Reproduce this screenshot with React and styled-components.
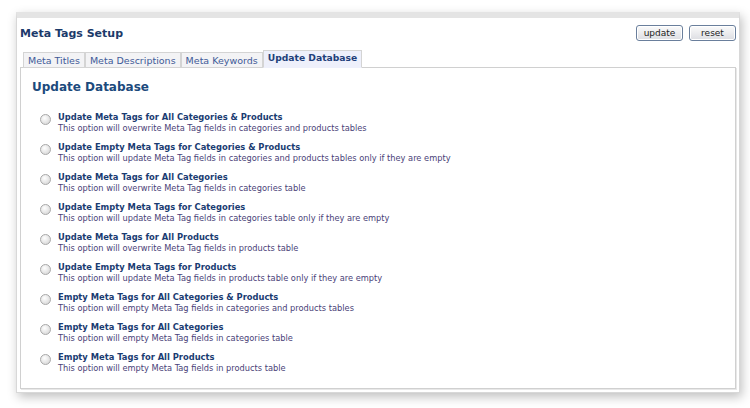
import React from 'react';
import styled, { createGlobalStyle } from 'styled-components';

const options = [
  ['Update Meta Tags for All Categories & Products', 'This option will overwrite Meta Tag fields in categories and products tables'],
  ['Update Empty Meta Tags for Categories & Products', 'This option will update Meta Tag fields in categories and products tables only if they are empty'],
  ['Update Meta Tags for All Categories', 'This option will overwrite Meta Tag fields in categories table'],
  ['Update Empty Meta Tags for Categories', 'This option will update Meta Tag fields in categories table only if they are empty'],
  ['Update Meta Tags for All Products', 'This option will overwrite Meta Tag fields in products table'],
  ['Update Empty Meta Tags for Products', 'This option will update Meta Tag fields in products table only if they are empty'],
  ['Empty Meta Tags for All Categories & Products', 'This option will empty Meta Tag fields in categories and products tables'],
  ['Empty Meta Tags for All Categories', 'This option will empty Meta Tag fields in categories table'],
  ['Empty Meta Tags for All Products', 'This option will empty Meta Tag fields in products table'],
];

const tabs = ['Meta Titles', 'Meta Descriptions', 'Meta Keywords', 'Update Database'];

const App = () => {
  return (
    <>
      <GlobalStyle />
      <Page>
        <Frame>
          <Header>
            <Title>Meta Tags Setup</Title>
            <Buttons>
              <Button>update</Button>
              <Button>reset</Button>
            </Buttons>
          </Header>
          <Tabs>
            {tabs.map((t, i) => (
              <Tab key={t} $active={i === tabs.length - 1}>{t}</Tab>
            ))}
          </Tabs>
          <Panel>
            <Heading>Update Database</Heading>
            <List>
              {options.map(([title, desc]) => (
                <Option key={title}>
                  <Radio />
                  <div>
                    <OptTitle>{title}</OptTitle>
                    <OptDesc>{desc}</OptDesc>
                  </div>
                </Option>
              ))}
            </List>
          </Panel>
        </Frame>
      </Page>
    </>
  );
};

const GlobalStyle = createGlobalStyle`
  body {
    margin: 0;
    background: #ffffff;
    font-family: "DejaVu Sans", Verdana, sans-serif;
  }
`;

const Page = styled.div`
  width: 750px;
  height: 408px;
  padding: 12px 0 0 16px;
  box-sizing: border-box;
`;

const Frame = styled.div`
  width: 724px;
  height: 381px;
  box-sizing: border-box;
  background: #ffffff;
  border: 1px solid #d8d8d8;
  border-top: 6px solid #e4e4e4;
  box-shadow: 2px 4px 10px rgba(0, 0, 0, 0.25);
  padding: 0 3px 3px 3px;
  display: flex;
  flex-direction: column;
`;

const Header = styled.div`
  display: flex;
  justify-content: space-between;
  align-items: flex-start;
  padding-top: 7px;
  height: 24px;
`;

const Title = styled.h1`
  margin: 0;
  padding-top: 2px;
  font-size: 11px;
  font-weight: bold;
  color: #1c3a6a;
`;

const Buttons = styled.div`
  display: flex;
  gap: 6px;
`;

const Button = styled.button`
  width: 47px;
  height: 16px;
  padding: 0;
  font-family: "DejaVu Sans", Verdana, sans-serif;
  font-size: 9px;
  color: #222;
  border: 1px solid #6a7f9c;
  border-radius: 3px;
  background: linear-gradient(#fbfbfb, #dcdde2);
  box-shadow: inset 0 0 0 1px #ffffff;
`;

const Tabs = styled.div`
  display: flex;
  align-items: flex-end;
  padding-left: 3px;
  height: 18px;
`;

const Tab = styled.div`
  height: ${p => (p.$active ? '18px' : '16px')};
  box-sizing: border-box;
  padding: ${p => (p.$active ? '1px 4px 0' : '2px 4px 0')};
  margin-bottom: -1px;
  border: 1px solid #d4d4d4;
  border-bottom: ${p => (p.$active ? '1px solid #eef0fb' : '1px solid #d4d4d4')};
  background: ${p => (p.$active ? '#eef0fb' : '#f3f3f5')};
  font-size: ${p => (p.$active ? '9.2px' : '9.5px')};
  font-weight: ${p => (p.$active ? 'bold' : 'normal')};
  color: ${p => (p.$active ? '#1f3f7a' : '#3e5a98')};
  white-space: nowrap;
  position: relative;
  z-index: 1;
`;

const Panel = styled.div`
  flex: 1;
  border: 1px solid #d0d0d0;
  box-shadow: 1px 1px 0 #e8e8e8;
  padding: 12px 11px 0;
`;

const Heading = styled.h2`
  margin: 0;
  font-size: 12px;
  font-weight: bold;
  color: #1c4a7c;
`;

const List = styled.div`
  display: flex;
  flex-direction: column;
  gap: 8px;
  margin-top: 18px;
  padding-left: 8px;
`;

const Option = styled.div`
  display: flex;
  align-items: flex-start;
  gap: 7px;
`;

const Radio = styled.span`
  width: 9px;
  height: 9px;
  margin-top: 2px;
  border-radius: 50%;
  border: 1px solid #a8a8a8;
  background: radial-gradient(circle at 40% 35%, #ffffff, #cfcfcf);
  flex-shrink: 0;
`;

const OptTitle = styled.div`
  font-size: 8.35px;
  font-weight: bold;
  color: #1a3c72;
  line-height: 11px;
`;

const OptDesc = styled.div`
  font-size: 8.25px;
  color: #4a3f78;
  line-height: 11px;
`;

export default App;
